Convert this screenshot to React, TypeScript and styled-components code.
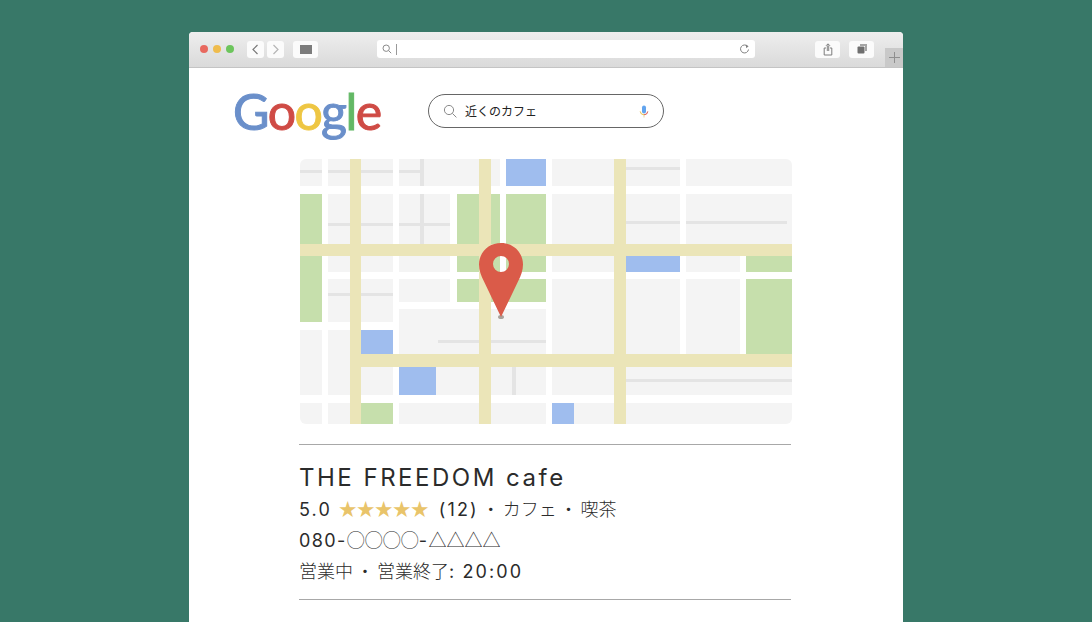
import React from "react";
import styled, { createGlobalStyle } from "styled-components";

const GlobalStyle = createGlobalStyle`
  html, body { margin: 0; padding: 0; }
  body {
    background: #387868;
    font-family: "Noto Sans CJK JP", "Liberation Sans", sans-serif;
    overflow: hidden;
  }
`;

const Page = styled.div`
  width: 1092px;
  height: 622px;
  padding: 32px 0 0 189px;
  box-sizing: border-box;
  overflow: hidden;
`;

const BrowserWindow = styled.div`
  width: 714px;
  height: 590px;
  background: #fff;
  border-radius: 4px 4px 0 0;
  overflow: hidden;
`;

const Toolbar = styled.div`
  height: 36px;
  box-sizing: border-box;
  display: flex;
  align-items: center;
  padding: 0 0 1px 11px;
  background: linear-gradient(#eeeeee, #dadada);
  border-bottom: 1px solid #c4c4c4;
`;

const Dots = styled.div`
  display: flex;
  gap: 5px;
  margin-right: 13px;
`;

const Dot = styled.span<{ $color: string }>`
  width: 8px;
  height: 8px;
  border-radius: 50%;
  background: ${(p) => p.$color};
`;

const ToolButton = styled.div<{ $width: number; $gap?: number }>`
  width: ${(p) => p.$width}px;
  height: 17px;
  margin-right: ${(p) => p.$gap ?? 0}px;
  background: #fbfbfb;
  border-radius: 3px;
  display: flex;
  align-items: center;
  justify-content: center;
`;

const SidebarGlyph = styled.span`
  width: 12px;
  height: 9px;
  background: #7c7c7c;
`;

const AddressBar = styled.div`
  width: 378px;
  height: 18px;
  margin: 0 60px 0 59px;
  background: #fff;
  border-radius: 3px;
  display: flex;
  align-items: center;
  padding: 0 5px;
  box-sizing: border-box;
`;

const Caret = styled.span`
  width: 1px;
  height: 11px;
  margin-left: 4px;
  background: #999;
`;

const Reload = styled.svg`
  margin-left: auto;
`;

const NewTab = styled.div`
  width: 18px;
  height: 19px;
  margin-left: auto;
  align-self: flex-end;
  margin-bottom: -1px;
  background: #c9c9c9;
  display: flex;
  align-items: center;
  justify-content: center;
`;

const Content = styled.main`
  padding: 0 112px 0 110px;
  display: flex;
  flex-direction: column;
`;

const Header = styled.header`
  height: 91px;
  margin-left: -66px;
  display: flex;
  align-items: flex-start;
`;

const Logo = styled.div`
  width: 195px;
  margin-top: 8px;
  font-family: Lato, sans-serif;
  font-size: 50px;
  line-height: 70px;
  letter-spacing: -1.6px;
  -webkit-text-stroke: 1px currentColor;
`;

const LogoLetter = styled.span<{ $color: string }>`
  color: ${(p) => p.$color};
`;

const SearchBox = styled.div`
  width: 236px;
  height: 34px;
  margin-top: 26px;
  box-sizing: border-box;
  display: flex;
  align-items: center;
  padding: 0 14px 0 14px;
  border: 1px solid #666;
  border-radius: 17px;
  font-size: 12px;
  line-height: 14px;
  color: #222;
`;

const SearchText = styled.span`
  margin-left: 8px;
  margin-top: -1px;
`;

const Mic = styled.svg`
  margin-left: auto;
`;

const MapFrame = styled.svg`
  display: block;
  width: 492px;
  height: 265px;
  margin-left: 1px;
  border-radius: 6px;
`;

const Info = styled.section`
  margin-top: 20px;
  width: 492px;
  height: 156px;
  box-sizing: border-box;
  border-top: 1px solid #a8a8a8;
  border-bottom: 1px solid #a8a8a8;
  padding-top: 16px;
  color: #2b2b2b;
`;

const Title = styled.h1`
  margin: 0 0 -2px;
  font-family: Inter, sans-serif;
  font-size: 24px;
  font-weight: 400;
  line-height: 34px;
  letter-spacing: 2.5px;
`;

const Line = styled.p`
  margin: 0;
  font-size: 18px;
  font-weight: 300;
  line-height: 31px;
  word-spacing: -1px;
  white-space: nowrap;
`;

// latin runs sit wider than the kana around them
const Latin = styled.span<{ $tracking?: number }>`
  font-family: Inter, sans-serif;
  font-weight: 400;
  line-height: 1;
  letter-spacing: ${(p) => p.$tracking ?? 2.1}px;
`;

const Stars = styled.span`
  color: #e9c46a;
  margin: 0 10px 0 4px;
`;

const GREY = "#f4f4f4";
const GREEN = "#c6dfac";
const BLUE = "#9fbdee";
const ROAD = "#ebe5b8";
const THIN = "#e4e4e4";

type R = [number, number, number, number];

// x1, y1, x2, y2 in page pixels
const greyBlocks: R[] = [
  [300, 159, 322, 186], [328, 159, 393, 186], [399, 159, 500, 186], [552, 159, 680, 186], [686, 159, 792, 186],
  [328, 194, 393, 272], [399, 194, 450, 272], [552, 194, 680, 272], [686, 194, 792, 244], [686, 256, 740, 272],
  [328, 279, 393, 322], [399, 279, 450, 302], [552, 279, 680, 354], [686, 279, 740, 354],
  [300, 330, 322, 395], [328, 330, 393, 395], [399, 309, 546, 395], [552, 367, 792, 395],
  [300, 403, 322, 424], [328, 403, 393, 424], [399, 403, 546, 424], [552, 403, 792, 424],
];
const greenBlocks: R[] = [
  [300, 194, 322, 322], [457, 194, 500, 272], [506, 194, 546, 272], [457, 279, 546, 302],
  [746, 256, 792, 272], [746, 279, 792, 354], [361, 403, 393, 424],
];
const blueBlocks: R[] = [
  [506, 159, 546, 186], [626, 256, 680, 272], [361, 330, 393, 354], [399, 367, 436, 395], [552, 403, 574, 424],
];
const thinLines: R[] = [
  [300, 170, 322, 173], [328, 170, 393, 173], [399, 170, 424, 173], [420, 159, 424, 186], [420, 194, 424, 244],
  [328, 223, 393, 226], [399, 223, 450, 226], [328, 293, 393, 296], [438, 340, 546, 343], [512, 367, 516, 395],
  [626, 167, 680, 170], [626, 221, 680, 224], [686, 221, 787, 224], [626, 379, 792, 382],
];
const roads: R[] = [
  [350, 159, 361, 424], [479, 159, 491, 424], [614, 159, 626, 424], [300, 244, 792, 256], [350, 354, 792, 367],
];

function Rects({ items, fill }: { items: R[]; fill: string }) {
  return (
    <>
      {items.map(([x1, y1, x2, y2]) => (
        <rect key={`${x1}-${y1}-${x2}`} x={x1} y={y1} width={x2 - x1} height={y2 - y1} fill={fill} />
      ))}
    </>
  );
}

export default function App() {
  return (
    <>
      <GlobalStyle />
      <Page>
        <BrowserWindow>
          <Toolbar>
            <Dots>
              <Dot $color="#e8695f" />
              <Dot $color="#efbc4d" />
              <Dot $color="#6cc55c" />
            </Dots>
            <ToolButton $width={17} $gap={3}>
              <svg width="9" height="11" viewBox="0 0 9 11" fill="none" stroke="#777" strokeWidth="1.2">
                <path d="M6.5 1 2 5.5 6.5 10" />
              </svg>
            </ToolButton>
            <ToolButton $width={17} $gap={9}>
              <svg width="9" height="11" viewBox="0 0 9 11" fill="none" stroke="#b5b5b5" strokeWidth="1.2">
                <path d="M2.5 1 7 5.500 2.500 10" />
              </svg>
            </ToolButton>
            <ToolButton $width={25}>
              <SidebarGlyph />
            </ToolButton>
            <AddressBar>
              <svg width="10" height="10" viewBox="0 0 10 10" fill="none" stroke="#8a8a8a" strokeWidth="1">
                <circle cx="4.2" cy="4.2" r="3.2" />
                <path d="m6.6 6.6 2.6 2.6" />
              </svg>
              <Caret />
              <Reload width="11" height="11" viewBox="0 0 11 11" fill="none" stroke="#808080" strokeWidth="1">
                <path d="M8.6 2.4A4 4 0 1 0 9.5 5.5" />
                <path d="M6.8 0.6 9.6 2.2 7.2 4.2z" fill="#808080" stroke="none" />
              </Reload>
            </AddressBar>
            <ToolButton $width={25} $gap={9}>
              <svg width="10" height="13" viewBox="0 0 10 13" fill="none" stroke="#7c7c7c" strokeWidth="1">
                <path d="M3 5H1.2v7h7.600V5H7" />
                <path d="M3.600 3h2.800v5H3.600z" fill="#bdbdbd" stroke="none" />
                <path d="M5 8V1M3 2.800 5 .8l2 2" />
              </svg>
            </ToolButton>
            <ToolButton $width={25}>
              <svg width="10" height="10" viewBox="0 0 10 10">
                <path d="M3 0h7v7H8V2H3z" fill="#a5a5a5" />
                <rect x="0.5" y="2.5" width="7" height="7" rx="1" fill="#6f6f6f" />
              </svg>
            </ToolButton>
            <NewTab>
              <svg width="11" height="11" viewBox="0 0 11 11" stroke="#8f8f8f" strokeWidth="1">
                <path d="M5.500 0v11M0 5.500h11" />
              </svg>
            </NewTab>
          </Toolbar>
          <Content>
            <Header>
              <Logo>
                <LogoLetter $color="#6a8fca">G</LogoLetter>
                <LogoLetter $color="#cf4b45">o</LogoLetter>
                <LogoLetter $color="#eec643">o</LogoLetter>
                <LogoLetter $color="#6a8fca">g</LogoLetter>
                <LogoLetter $color="#63b865">l</LogoLetter>
                <LogoLetter $color="#cf4b45">e</LogoLetter>
              </Logo>
              <SearchBox>
                <svg width="14" height="14" viewBox="0 0 14 14" fill="none" stroke="#8a8a8a" strokeWidth="1">
                  <circle cx="6" cy="6" r="4.6" />
                  <path d="m9.400 9.400 4 4" />
                </svg>
                <SearchText>近くのカフェ</SearchText>
                <Mic width="10" height="13" viewBox="0 0 10 13" fill="none">
                  <rect x="3" y="0.5" width="4" height="8" rx="2" fill="#62a4ee" />
                  <path d="M1.200 6.400a3.800 3.800 0 0 0 3.800 3.400" stroke="#e6c04f" />
                  <path d="M8.800 6.400A3.800 3.800 0 0 1 5 9.800" stroke="#d9534b" />
                  <path d="M5 9.800V12.500" stroke="#e9d79a" />
                </Mic>
              </SearchBox>
            </Header>
            <MapFrame viewBox="300 159 492 265">
              <Rects items={greyBlocks} fill={GREY} />
              <Rects items={greenBlocks} fill={GREEN} />
              <Rects items={blueBlocks} fill={BLUE} />
              <Rects items={thinLines} fill={THIN} />
              <Rects items={roads} fill={ROAD} />
              <ellipse cx="501" cy="317" rx="3" ry="2" fill="#a9a29c" />
              <path
                fillRule="evenodd"
                fill="#da5b49"
                d="M501 243c-12.500 0-22 9.500-22 21.500 0 6 2 11 5 17l17 35.500 17-35.500c3-6 5-11 5-17 0-12-9.500-21.500-22-21.500zm0 13a8 8 0 1 1 0 16 8 8 0 0 1 0-16z"
              />
            </MapFrame>
            <Info>
              <Title>THE FREEDOM cafe</Title>
              <Line>
                <Latin>5.0</Latin> <Stars>★★★★★</Stars>
                <Latin>(12)</Latin> ・ カフェ ・ 喫茶
              </Line>
              <Line>
                <Latin $tracking={1.4}>080-</Latin>◯◯◯◯<Latin $tracking={1.4}>-</Latin>△△△△
              </Line>
              <Line>
                営業中 ・ 営業終了<Latin>: 20:00</Latin>
              </Line>
            </Info>
          </Content>
        </BrowserWindow>
      </Page>
    </>
  );
}
